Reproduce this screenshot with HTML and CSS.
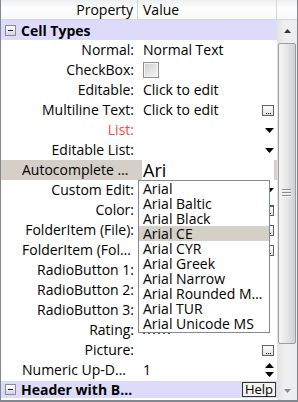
FILE: index.html
```html
<!DOCTYPE html>
<html>
<head>
<meta charset="utf-8">
<link rel="stylesheet" href="styles.css">
</head>
<body>
<div class="win">
  <div class="hdr">
    <div class="hc hprop">Property</div>
    <div class="hc hval">Value</div>
    <div class="hc hsb"></div>
  </div>
  <div class="body">
    <div class="grid">
      <div class="grp"><span class="tog"><span class="minus"></span></span>Cell Types</div>
      <div class="row"><div class="lab">Normal:</div><div class="val">Normal Text</div></div>
      <div class="row"><div class="lab">CheckBox:</div><div class="val"><span class="chk"></span></div></div>
      <div class="row"><div class="lab">Editable:</div><div class="val">Click to edit</div></div>
      <div class="row"><div class="lab">Multiline Text:</div><div class="val">Click to edit<span class="ctl btn"><i></i><i></i><i></i></span></div></div>
      <div class="row"><div class="lab red">List:</div><div class="val"><svg class="ctl tri" width="9" height="5" viewBox="0 0 9 5"><polygon points="0,0 9,0 4.5,5" fill="#000"/></svg></div></div>
      <div class="row"><div class="lab">Editable List:</div><div class="val"><svg class="ctl tri" width="9" height="5" viewBox="0 0 9 5"><polygon points="0,0 9,0 4.5,5" fill="#000"/></svg></div></div>
      <div class="row sel"><div class="lab trunc">Autocomplete …</div><div class="val ed"><div class="editor">Ari</div></div></div>
      <div class="row"><div class="lab">Custom Edit:</div><div class="val"><svg class="ctl tri" width="9" height="5" viewBox="0 0 9 5"><polygon points="0,0 9,0 4.5,5" fill="#000"/></svg></div></div>
      <div class="row"><div class="lab">Color:</div><div class="val"><span class="ctl btn blue"><i></i><i></i><i></i></span></div></div>
      <div class="row"><div class="lab">FolderItem (File):</div><div class="val"><span class="ctl btn"><i></i><i></i><i></i></span></div></div>
      <div class="row"><div class="lab trunc">FolderItem (Fol…</div><div class="val"><span class="ctl btn"><i></i><i></i><i></i></span></div></div>
      <div class="row"><div class="lab">RadioButton 1:</div><div class="val"></div></div>
      <div class="row"><div class="lab">RadioButton 2:</div><div class="val"></div></div>
      <div class="row"><div class="lab">RadioButton 3:</div><div class="val"></div></div>
      <div class="row"><div class="lab">Rating:</div><div class="val"><span class="stars"></span></div></div>
      <div class="row"><div class="lab">Picture:</div><div class="val"><span class="ctl btn"><i></i><i></i><i></i></span></div></div>
      <div class="row"><div class="lab trunc">Numeric Up-D…</div><div class="val">1<svg class="ctl spin" width="9" height="14" viewBox="0 0 9 14"><polygon points="0,5 9,5 4.5,0" fill="#000"/><polygon points="0,9 9,9 4.5,14" fill="#000"/></svg></div></div>
      <div class="grp last"><span class="tog"><span class="minus"></span></span>Header with B…<span class="help">Help</span></div>
    </div>
    <div class="sb">
      <div class="sbbtn"><svg width="7" height="4" viewBox="0 0 7 4"><polygon points="0,4 7,4 3.5,0" fill="#333"/></svg></div>
      <div class="thumb"><span class="grip"></span></div>
      <div class="sbbtn down"><svg width="7" height="4" viewBox="0 0 7 4"><polygon points="0,0 7,0 3.5,4" fill="#8a8a8a"/></svg></div>
    </div>
  </div>
  <div class="dd">
    <div class="it">Arial</div>
    <div class="it">Arial Baltic</div>
    <div class="it">Arial Black</div>
    <div class="it hi">Arial CE</div>
    <div class="it">Arial CYR</div>
    <div class="it">Arial Greek</div>
    <div class="it">Arial Narrow</div>
    <div class="it">Arial Rounded M…</div>
    <div class="it">Arial TUR</div>
    <div class="it">Arial Unicode MS</div>
  </div>
</div>
</body>
</html>
```
FILE: styles.css
```css
* { box-sizing: border-box; margin: 0; padding: 0; }
body { margin: 0; background: #fff; font-family: "Open Sans", "Noto Sans", sans-serif; font-size: 14px; color: #000; }
.win { position: relative; width: 298px; height: 402px; border: 1px solid #828790; border-top: 0; border-bottom-width: 2px; overflow: hidden; background: #fff; }
.hdr { display: grid; grid-template-columns: 137px 139px 20px; height: 20px; background: linear-gradient(#eceef0, #ffffff 45%, #f8f8f8); border-bottom: 1px solid #d5d5d5; }
.hc { line-height: 19px; white-space: nowrap; }
.hprop { text-align: right; padding-right: 4px; border-right: 1px solid #d5d5d5; }
.hval { padding-left: 5px; border-right: 1px solid #d5d5d5; }
.body { display: flex; height: 380px; }
.grid { width: 276px; display: flex; flex-direction: column; }
.row { display: grid; grid-template-columns: 137px 139px; height: 20px; }
.lab { text-align: right; padding-right: 4px; white-space: nowrap; overflow: hidden; line-height: 20px; }
.lab.trunc { text-align: left; padding-left: 21px; padding-right: 0; }
.red { color: #ff4444; }
.val { display: flex; align-items: center; height: 20px; padding: 0 3px 0 5px; white-space: nowrap; line-height: 20px; }
.ctl { margin-left: auto; flex: none; }
.tri { margin-right: 0; }
.grp { display: flex; align-items: center; height: 20px; background: #dcdcfa; padding-left: 4px; font-weight: bold; white-space: nowrap; }
.grp.last { height: 17px; margin: 1px 0 2px; }
.tog { width: 11px; height: 11px; border: 1px solid #8a8a9c; background: linear-gradient(#ffffff, #d6d6e2); margin-right: 5px; display: flex; align-items: center; justify-content: center; flex: none; }
.minus { width: 5px; height: 1px; background: #1a1a50; }
.help { margin-left: auto; margin-right: 1px; font-weight: normal; font-size: 13px; line-height: 13px; height: 15px; padding: 0 2px; border: 1px solid #333; background: #f4f4ee; }
.chk { width: 16px; height: 16px; border: 1px solid #8e8f8f; box-shadow: inset 0 0 0 1px #f4f4f4; background: linear-gradient(135deg, #cfcfcf, #f6f6f6); }
.btn { width: 12px; height: 11px; border: 1px solid #606060; background: linear-gradient(#ffffff, #e2e2e2); display: flex; align-items: flex-end; justify-content: center; gap: 1px; padding-bottom: 1px; margin-right: 0; }
.btn i { width: 1px; height: 1px; background: #000; }
.btn.blue { box-shadow: inset 2px 2px 0 -1px #3050ff; }
.ed { background: #d4d0c8; padding: 0 3px 0 4px; }
.row.sel .lab { background: #d4d0c8; }
.editor { background: #fff; height: 20px; width: 100%; font-size: 18px; line-height: 20px; padding-left: 1px; }
.stars { width: 29px; height: 1px; margin-top: 7px; background: repeating-linear-gradient(90deg, #555 0 2px, transparent 2px 5px); }
.spin { margin-right: 0; }
.sb { width: 20px; display: flex; flex-direction: column; background: linear-gradient(90deg, #e2e2e2, #efefef 40%, #ececec); }
.sbbtn { height: 22px; display: flex; align-items: center; justify-content: center; flex: none; }
.sbbtn.down { margin-top: auto; height: 20px; padding-top: 2px; }
.thumb { height: 301px; margin: 1px 1px 0; border: 1px solid #9c9c9c; border-radius: 2px; background: linear-gradient(90deg, #f6f6f6, #e6e6e6 50%, #d0d0d0); display: flex; align-items: center; justify-content: center; flex: none; }
.grip { width: 9px; height: 9px; margin-left: -1px; background: repeating-linear-gradient(#8a8a8a 0 1px, #f6f6f6 1px 2px, transparent 2px 3px); }
.dd { position: absolute; left: 137px; top: 180px; width: 132px; height: 153px; border: 1px solid #828790; background: #fff; }
.it { height: 15px; line-height: 15px; padding-left: 4px; white-space: nowrap; overflow: hidden; }
.it.hi { background: #d4d0c8; }
```
